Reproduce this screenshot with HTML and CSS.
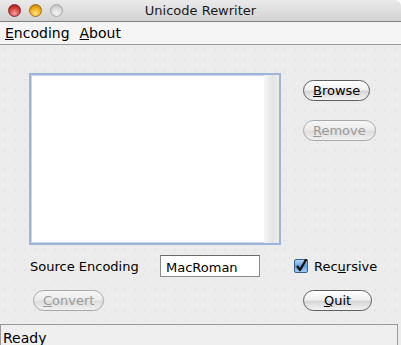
FILE: index.html
```html
<!DOCTYPE html>
<html>
<head>
    <title>Unicode Rewriter</title>
    <link rel="stylesheet" href="styles.css">
</head>
<body>
    <div class="window">
        <!-- Title bar -->
        <div class="titlebar">
            <div class="lights">
                <span class="light red"></span>
                <span class="light yellow"></span>
                <span class="light gray"></span>
            </div>
            <div class="title">Unicode Rewriter</div>
            <div></div>
        </div>

        <!-- Menu bar -->
        <div class="menubar">
            <span class="menu"><u>E</u>ncoding</span>
            <span class="menu"><u>A</u>bout</span>
        </div>

        <!-- Main content -->
        <div class="content">
            <div class="top-row">
                <div class="listbox">
                    <div class="list-area"></div>
                    <div class="scroll-track"></div>
                </div>
                <div class="side-buttons">
                    <button class="aqua"><u>B</u>rowse</button>
                    <button class="aqua" disabled><u>R</u>emove</button>
                </div>
            </div>

            <div class="option-row">
                <span class="field-label">Source Encoding</span>
                <input class="text-field" type="text" value="MacRoman">
                <span class="check">
                    <svg class="check-box" width="14" height="14" viewBox="0 0 14 14">
                        <defs>
                            <linearGradient id="boxFill" x1="0" y1="0" x2="0" y2="1">
                                <stop offset="0" stop-color="#bcd9f5"/>
                                <stop offset="0.5" stop-color="#5f9fe0"/>
                                <stop offset="1" stop-color="#a9d3fb"/>
                            </linearGradient>
                        </defs>
                        <rect x="0.5" y="0.5" width="13" height="13" rx="1.5" fill="url(#boxFill)" stroke="#3b5f8f"/>
                        <path d="M3 7 L6 11 L12.5 0" fill="none" stroke="#111" stroke-width="2.4" stroke-linejoin="round"/>
                    </svg>
                    <span>Rec<u>u</u>rsive</span>
                </span>
            </div>

            <div class="action-row">
                <button class="aqua convert" disabled><u>C</u>onvert</button>
                <button class="aqua quit"><u>Q</u>uit</button>
            </div>
        </div>

        <!-- Status bar -->
        <div class="statusbar">Ready</div>
    </div>
</body>
</html>
```
FILE: styles.css
```css
/* General */
body {
    margin: 0;
    font-family: "DejaVu Sans", Verdana, sans-serif;
    color: #000000;
}

.window {
    width: 401px;
    height: 345px;
    overflow: hidden;
    display: flex;
    flex-direction: column;
    background-color: #ececec;
    border-top-right-radius: 6px;
}

/* Title bar */
.titlebar {
    height: 21px;
    display: grid;
    grid-template-columns: 1fr auto 1fr;
    align-items: center;
    background: linear-gradient(#eaeaea, #d2d2d2);
    border-bottom: 1px solid #7f7f7f;
    border-top-right-radius: 6px;
}

.lights {
    display: flex;
    gap: 8px;
    padding-left: 8px;
}

.light {
    width: 13px;
    height: 13px;
    border-radius: 50%;
    box-sizing: border-box;
}

.red {
    background: radial-gradient(circle at 50% 75%, #f6a0a0, #d33a3a 55%, #8e1010);
    border: 1px solid #8a2a2a;
}

.yellow {
    background: radial-gradient(circle at 50% 75%, #ffe28a, #efaa14 55%, #a86a00);
    border: 1px solid #a07018;
}

.gray {
    background: radial-gradient(circle at 50% 75%, #f4f4f4, #d8d8d8 55%, #b0b0b0);
    border: 1px solid #a8a8a8;
}

.title {
    font-size: 13px;
    color: #1a1a1a;
}

/* Menu bar */
.menubar {
    height: 22px;
    display: flex;
    align-items: center;
    gap: 10px;
    padding-left: 5px;
    background-color: #f5f5f5;
    border-bottom: 1px solid #9a9a9a;
    font-size: 14px;
}

/* Main content */
.content {
    flex: 1;
    padding: 28px 0 0 29px;
    background-color: #ececec;
    background-image: radial-gradient(circle, #e4e4e4 0.8px, transparent 1.1px);
    background-size: 10px 10px;
}

.top-row {
    display: flex;
}

.listbox {
    width: 252px;
    height: 172px;
    box-sizing: border-box;
    display: flex;
    border: 2px solid #9cb5d8;
    box-shadow: inset 0 0 0 1px #c7d6ea;
    background-color: #ffffff;
}

.list-area {
    flex: 1;
}

.scroll-track {
    width: 15px;
    background: linear-gradient(to right, #f6f6f6, #e4e4e4 60%, #ededed);
}

.side-buttons {
    display: flex;
    flex-direction: column;
    align-items: flex-start;
    gap: 19px;
    padding: 7px 0 0 22px;
}

/* Aqua style buttons */
.aqua {
    height: 21px;
    padding: 0 9px;
    box-sizing: border-box;
    font-family: "DejaVu Sans", Verdana, sans-serif;
    font-size: 13px;
    color: #000000;
    border: 1px solid #5e5e5e;
    border-radius: 11px;
    background: linear-gradient(#ffffff, #f0f0f0 45%, #d6d6d6 55%, #f4f4f4);
}

.aqua:disabled {
    color: #9a9a9a;
    border-color: #a9a9a9;
    background: linear-gradient(#f6f6f6, #ececec 45%, #dedede 55%, #f0f0f0);
}

/* Options row */
.option-row {
    display: flex;
    align-items: center;
    margin-top: 10px;
    height: 22px;
}

.field-label {
    width: 130px;
    padding-left: 1px;
    font-size: 13px;
}

.text-field {
    width: 100px;
    height: 22px;
    box-sizing: border-box;
    margin: 0;
    padding: 2px 5px 0;
    font-family: "DejaVu Sans", Verdana, sans-serif;
    font-size: 13px;
    border: 1px solid #8c8c8c;
    border-top-color: #6a6a6a;
    background-color: #ffffff;
}

.check {
    display: flex;
    align-items: center;
    gap: 6px;
    margin-left: 34px;
    font-size: 13px;
}

/* Actions row */
.action-row {
    display: flex;
    margin-top: 13px;
}

.convert {
    margin-left: 4px;
    width: 71px;
}

.quit {
    margin-left: 199px;
    width: 69px;
}

/* Status bar */
.statusbar {
    height: 21px;
    width: 398px;
    box-sizing: border-box;
    padding: 5px 0 0 2px;
    border: 1px solid #9a9a9a;
    border-bottom: none;
    background-color: #efefef;
    font-size: 14px;
}
```
